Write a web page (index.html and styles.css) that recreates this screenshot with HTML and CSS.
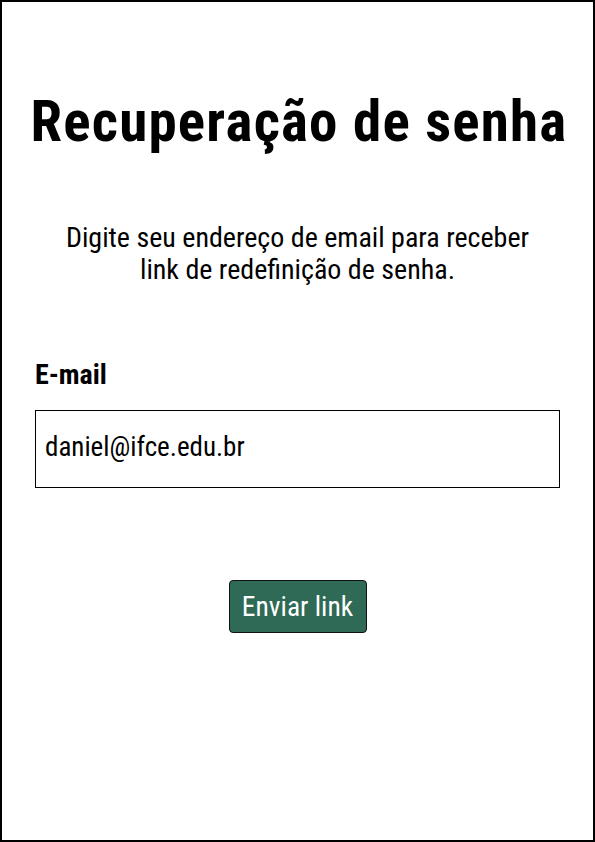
FILE: index.html
```html
<!DOCTYPE html>
<html lang="pt-BR">
<head>
<meta charset="utf-8">
<title>Recuperação de senha</title>
<link rel="stylesheet" href="styles.css">
</head>
<body>
<main class="page">
  <h1 class="title">Recuperação de senha</h1>
  <p class="intro">Digite seu endereço de email para receber<br>link de redefinição de senha.</p>
  <form class="form">
    <label class="label" for="email">E-mail</label>
    <div class="field" id="email">daniel@ifce.edu.br</div>
    <div class="actions">
      <button type="button" class="btn">Enviar link</button>
    </div>
  </form>
</main>
</body>
</html>
```

FILE: styles.css
```css
* { box-sizing: border-box; }
html, body { margin: 0; padding: 0; background: #fff; }
body {
  font-family: "Roboto Condensed", "Open Sans", sans-serif;
  color: #000;
}
.page {
  width: 595px;
  height: 842px;
  border: 2px solid #000;
  padding: 91px 33px 0 33px;
  display: flex;
  flex-direction: column;
}
.title {
  margin: 0 -24px;
  padding-left: 3px;
  font-size: 57px;
  line-height: 58px;
  font-weight: 700;
  text-align: center;
  letter-spacing: 1.2px;
  white-space: nowrap;
}
.intro {
  margin: 71px 0 0 0;
  font-size: 28px;
  line-height: 32px;
  text-align: center;
}
.form {
  display: flex;
  flex-direction: column;
  margin-top: 73px;
}
.label {
  font-size: 28px;
  line-height: 32px;
  font-weight: 700;
}
.field {
  margin-top: 19px;
  height: 78px;
  border: 1px solid #000;
  padding: 20px 0 0 9px;
  font-size: 27px;
  line-height: 32px;
}
.actions {
  display: flex;
  justify-content: center;
  margin-top: 92px;
}
.btn {
  width: 138px;
  height: 53px;
  background: #2e6a56;
  color: #fff;
  border: 1px solid #111;
  border-radius: 4px;
  font-family: inherit;
  font-size: 27.5px;
  padding: 0;
}
```
